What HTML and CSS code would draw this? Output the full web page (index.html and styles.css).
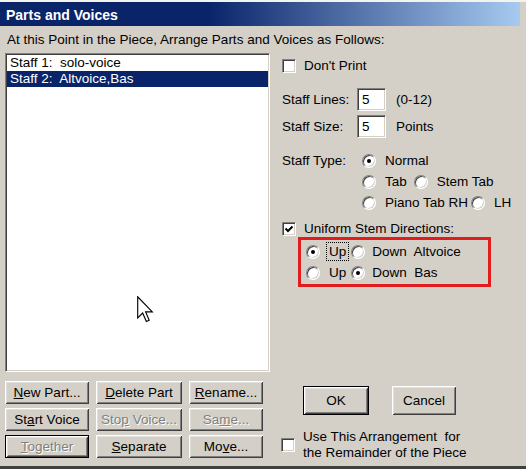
FILE: index.html
```html
<!DOCTYPE html>
<html>
<head>
	<title>Parts and Voices</title>
	<link rel="stylesheet" href="styles.css">
</head>
<body>
	<div class="window">
		<div class="titlebar">Parts and Voices</div>

		<div class="content">
			<div class="caption">At this Point in the Piece, Arrange Parts and Voices as Follows:</div>

			<div class="main">
				<div class="left">
					<div class="list">
						<div class="item">Staff 1:  solo-voice</div>
						<div class="item selected">Staff 2:  Altvoice,Bas</div>
						<svg class="cursor" width="17" height="27" viewBox="0 0 12 19">
							<path d="M0.5 0.5 V15.5 L4 12 L6.6 18 L8.6 17.1 L6.1 11.2 H10.8 Z" fill="#fff" stroke="#000" stroke-width="0.8" stroke-linejoin="miter"/>
						</svg>
					</div>

					<div class="buttons">
						<div class="btn"><span><u>N</u>ew Part...</span></div>
						<div class="btn"><span><u>D</u>elete Part</span></div>
						<div class="btn"><span><u>R</u>ename...</span></div>
						<div class="btn"><span>St<u>a</u>rt Voice</span></div>
						<div class="btn disabled"><span>Sto<u>p</u> Voice...</span></div>
						<div class="btn disabled"><span>Sa<u>m</u>e...</span></div>
						<div class="btn default disabled"><span><u>T</u>ogether</span></div>
						<div class="btn"><span><u>S</u>eparate</span></div>
						<div class="btn"><span>Mo<u>v</u>e...</span></div>
					</div>
				</div>

				<div class="right">
					<div class="check-row">
						<span class="checkbox"></span>
						<span>Don't Print</span>
					</div>

					<div class="field-row first">
						<span class="field-label">Staff Lines:</span>
						<span class="textbox">5</span>
						<span class="unit">(0-12)</span>
					</div>
					<div class="field-row">
						<span class="field-label">Staff Size:</span>
						<span class="textbox">5</span>
						<span class="unit">Points</span>
					</div>

					<div class="type">
						<span class="type-label">Staff Type:</span>
						<div class="options">
							<div class="opt-row">
								<span class="radio checked"></span><span class="opt-text">Normal</span>
							</div>
							<div class="opt-row">
								<span class="radio"></span><span class="opt-text tab">Tab</span>
								<span class="radio"></span><span class="opt-text">Stem Tab</span>
							</div>
							<div class="opt-row">
								<span class="radio"></span><span class="opt-text rh">Piano Tab RH</span>
								<span class="radio"></span><span class="opt-text">LH</span>
							</div>
						</div>
					</div>

					<div class="check-row uniform">
						<span class="checkbox checked">
							<svg width="10" height="10" viewBox="0 0 10 10"><path d="M1.5 4.5 L4 7 L8.5 2.5" fill="none" stroke="#000" stroke-width="2"/></svg>
						</span>
						<span>Uniform Stem Directions:</span>
					</div>

					<div class="stems">
						<div class="opt-row">
							<span class="radio checked"></span><span class="opt-text up focus">Up</span>
							<span class="radio"></span><span class="opt-text down">Down&nbsp; Altvoice</span>
						</div>
						<div class="opt-row">
							<span class="radio"></span><span class="opt-text up">Up</span>
							<span class="radio checked"></span><span class="opt-text down">Down&nbsp; Bas</span>
						</div>
					</div>

					<div class="dialog-buttons">
						<div class="btn default ok"><span>OK</span></div>
						<div class="btn cancel"><span>Cancel</span></div>
					</div>

					<div class="check-row remainder">
						<span class="checkbox"></span>
						<span>Use This Arrangement&nbsp; for<br>the Remainder of the Piece</span>
					</div>
				</div>
			</div>
		</div>
	</div>
</body>
</html>
```

FILE: styles.css
```css
body{
	margin: 0;
	font: 13.5px "Liberation Sans", Arial, sans-serif;
	color: #000;
}

.window{
	width: 526px;
	height: 469px;
	box-sizing: border-box;
	background: #d4d0c8;
	border-top: 2px solid #f4f3ee;
	border-bottom: 3px solid #404040;
	overflow: hidden;
}

.titlebar{
	margin-right: 6px;
	height: 23px;
	padding: 1px 0 0 6px;
	line-height: 24px;
	font-size: 14px;
	font-weight: bold;
	color: #fff;
	background: linear-gradient(to right, #0a246a 40%, #a6caf0);
}

.content{
	padding-left: 5px;
}

.caption{
	margin: 6px 0 0 2px;
	line-height: 16px;
}

.main{
	display: flex;
	gap: 12px;
	margin-top: 5px;
}

.left{
	width: 265px;
}

.list{
	position: relative;
	height: 319px;
	box-sizing: border-box;
	padding-top: 1px;
	background: #fff;
	border: 1px solid;
	border-color: #808080 #fff #fff #808080;
	box-shadow: inset 1px 1px #404040, inset -1px -1px #d4d0c8;
}

.item{
	margin: 0 1px;
	padding-left: 3px;
	line-height: 16px;
	white-space: pre;
}

.selected{
	background: #0a246a;
	color: #fff;
}

.cursor{
	position: absolute;
	left: 131px;
	top: 242px;
}

.buttons{
	display: grid;
	grid-template-columns: 84px 86px 74px;
	grid-auto-rows: 23px;
	column-gap: 7px;
	row-gap: 4px;
	margin-top: 9px;
}

.btn{
	display: flex;
	align-items: center;
	justify-content: center;
	box-sizing: border-box;
	line-height: 16px;
	white-space: nowrap;
	background: #d4d0c8;
	box-shadow: inset 1px 1px #fff, inset -1px -1px #404040, inset 2px 2px #dfdfdf, inset -2px -2px #808080;
}

.btn.default{
	border: 1px solid #000;
}

.btn.disabled{
	color: #808080;
	text-shadow: 1px 1px #fff;
}

.right{
	padding-top: 5px;
	flex: 1;
}

.check-row{
	display: flex;
	align-items: center;
	gap: 8px;
	line-height: 16px;
}

.checkbox{
	width: 14px;
	height: 14px;
	box-sizing: border-box;
	flex: none;
	display: flex;
	align-items: center;
	justify-content: center;
	background: #fff;
	border: 1px solid;
	border-color: #808080 #fff #fff #808080;
	box-shadow: inset 1px 1px #404040, inset -1px -1px #d4d0c8;
}

.field-row{
	display: flex;
	align-items: center;
	height: 23px;
	margin-top: 4px;
}

.field-row.first{
	margin-top: 14px;
}

.field-label{
	width: 75px;
}

.textbox{
	width: 29px;
	height: 23px;
	box-sizing: border-box;
	padding-left: 4px;
	line-height: 21px;
	background: #fff;
	border: 1px solid;
	border-color: #808080 #fff #fff #808080;
	box-shadow: inset 1px 1px #404040, inset -1px -1px #d4d0c8;
}

.unit{
	margin-left: 10px;
}

.type{
	display: flex;
	margin-top: 12px;
}

.type-label{
	width: 80px;
	line-height: 21px;
}

.opt-row{
	display: flex;
	align-items: center;
	height: 21px;
}

.radio{
	width: 14px;
	height: 14px;
	box-sizing: border-box;
	flex: none;
	position: relative;
	border-radius: 50%;
	background: #fff;
	border: 1px solid;
	border-color: #808080 #fff #fff #808080;
	box-shadow: inset 1px 1px #404040, inset -1px -1px #d4d0c8;
}

.radio.checked::after{
	content: "";
	position: absolute;
	left: 4px;
	top: 4px;
	width: 4px;
	height: 4px;
	border-radius: 50%;
	background: #000;
}

.opt-text{
	margin: 0 4px 0 6px;
	padding: 0 2px;
	border: 1px dotted transparent;
	line-height: 17px;
}

.opt-text.rh{
	margin-right: 0;
}

.uniform{
	margin-top: 8px;
}

.stems{
	width: 193px;
	box-sizing: border-box;
	margin-left: 16px;
	padding: 1px 0 1px 5px;
	border: 3px solid #e01c1c;
}

.opt-text.up{
	margin-right: 2px;
}

.opt-text.focus{
	border-color: #000;
}

.opt-text.down{
	margin-left: 4px;
}

.dialog-buttons{
	display: flex;
	gap: 23px;
	margin-top: 99px;
	padding-left: 21px;
}

.ok{
	width: 66px;
	height: 29px;
}

.cancel{
	width: 64px;
	height: 29px;
}

.remainder{
	margin-top: 14px;
	margin-left: -1px;
}
```
